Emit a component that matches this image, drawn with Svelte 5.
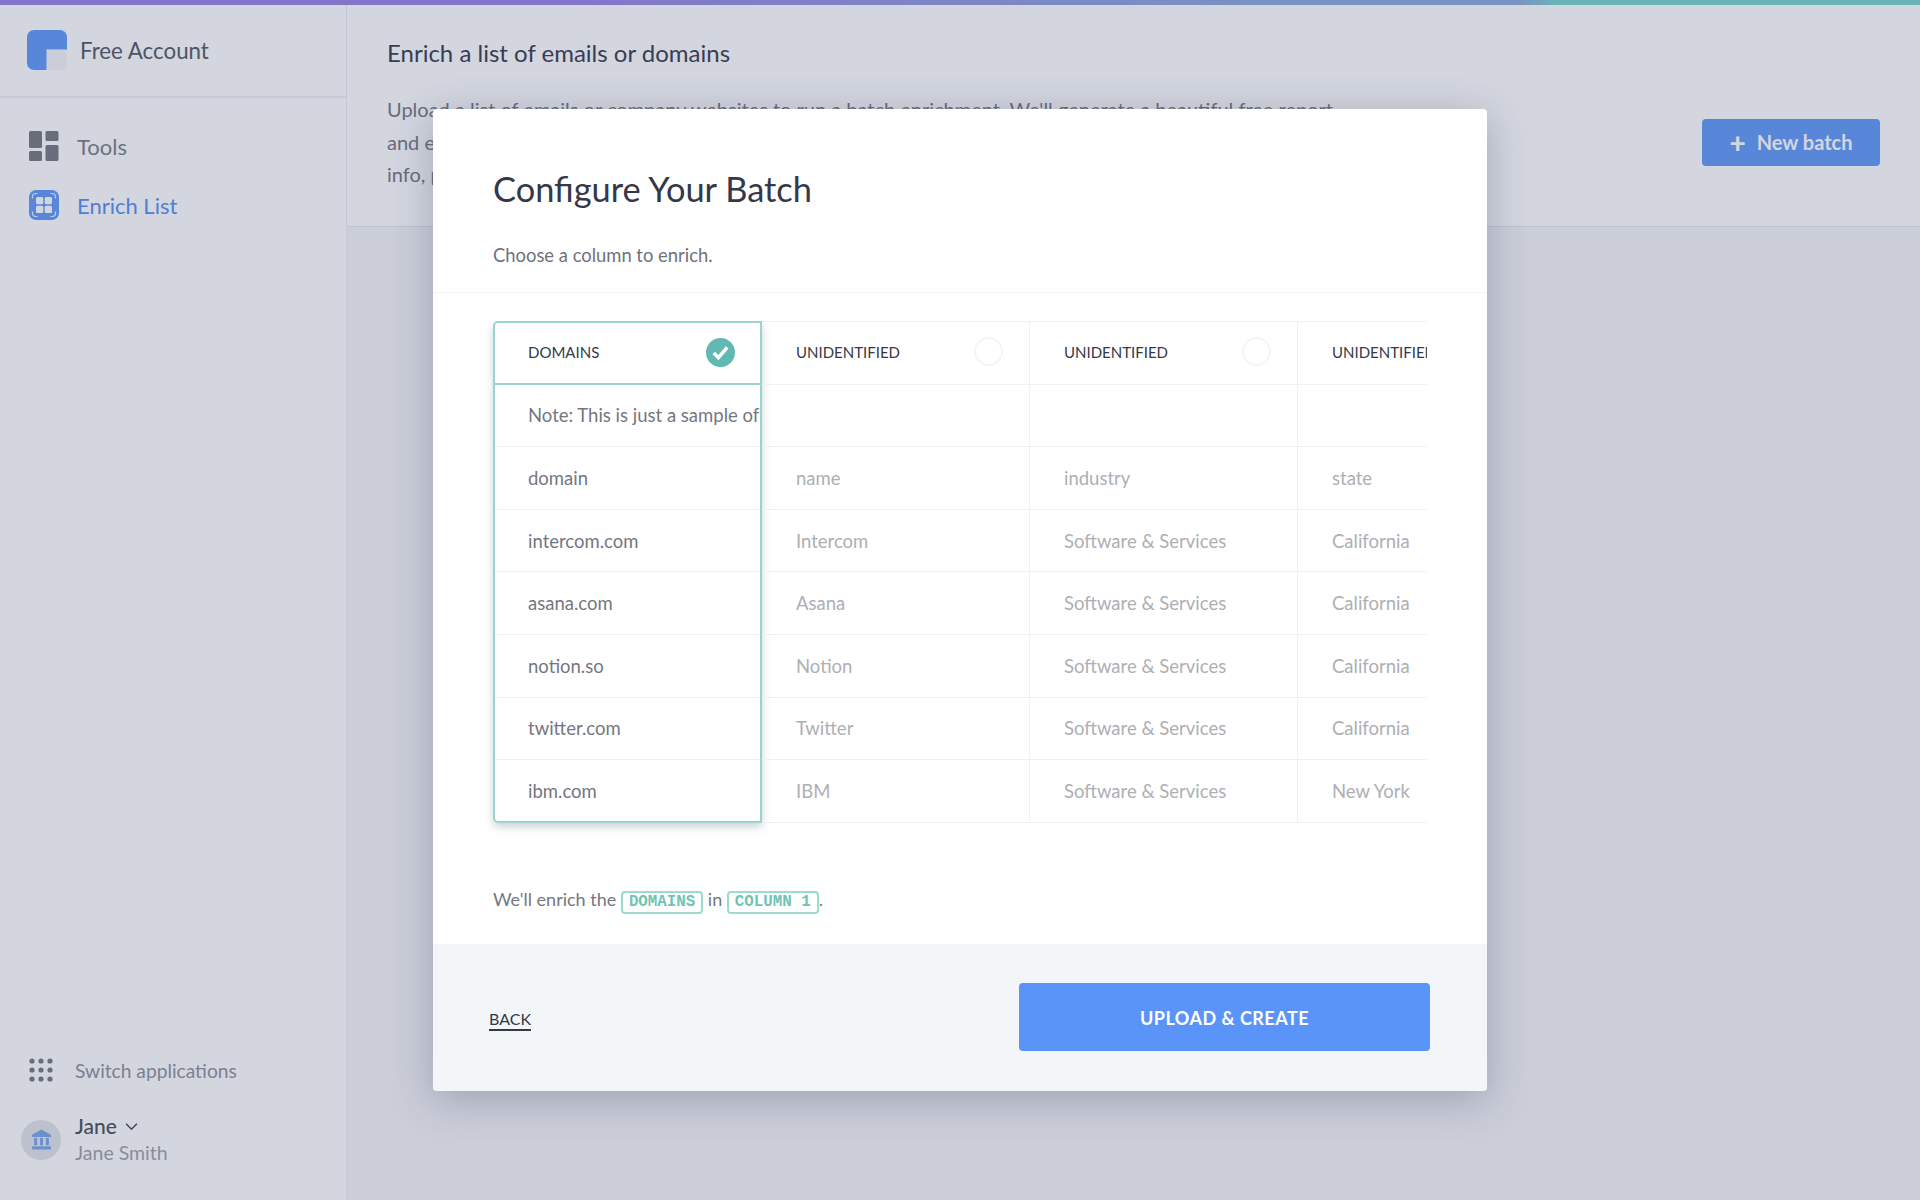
<script>
  const columns = [
    { head: 'DOMAINS', selected: true, cells: ['Note: This is just a sample of', 'domain', 'intercom.com', 'asana.com', 'notion.so', 'twitter.com', 'ibm.com'] },
    { head: 'UNIDENTIFIED', cells: ['', 'name', 'Intercom', 'Asana', 'Notion', 'Twitter', 'IBM'] },
    { head: 'UNIDENTIFIED', cells: ['', 'industry', 'Software & Services', 'Software & Services', 'Software & Services', 'Software & Services', 'Software & Services'] },
    { head: 'UNIDENTIFIED', cells: ['', 'state', 'California', 'California', 'California', 'California', 'New York'] }
  ];
</script>

<div class="page">
  <div class="topbar"></div>
  <div class="shell">
    <aside class="sidebar">
      <div class="brand">
        <svg class="logo" viewBox="0 0 40 40" width="40" height="40">
          <rect x="19.500" y="19.500" width="20.500" height="20.500" rx="4" fill="#f6f6f8" />
          <path d="M7 0H33A7 7 0 0 1 40 7V19.500H19.500V40H7A7 7 0 0 1 0 33V7A7 7 0 0 1 7 0Z" fill="#669df9" />
        </svg>
        <span>Free Account</span>
      </div>
      <nav class="nav">
        <div class="nav-item">
          <svg viewBox="0 0 30 30" width="30" height="30" fill="#7a7c84">
            <rect x="0" y="0" width="13" height="17" rx="1.500" /><rect x="16.500" y="0" width="13" height="10" rx="1.500" />
            <rect x="0" y="20" width="13" height="10" rx="1.500" /><rect x="16.500" y="14" width="13" height="16" rx="1.500" />
          </svg>
          <span>Tools</span>
        </div>
        <div class="nav-item active">
          <svg viewBox="0 0 30 30" width="30" height="30">
            <rect width="30" height="30" rx="7" fill="#669df9" />
            <g fill="#fff"><rect x="7" y="7" width="7.300" height="7.300" rx="1.500" /><rect x="15.700" y="7" width="7.300" height="7.300" rx="1.500" /><rect x="7" y="15.700" width="7.300" height="7.300" rx="1.500" /><rect x="15.700" y="15.700" width="7.300" height="7.300" rx="1.500" /></g>
            <path d="M3.500 8.500V6.500A3 3 0 0 1 6.500 3.500H8.500M21.500 3.500H23.500A3 3 0 0 1 26.500 6.500V8.500M26.500 21.500V23.500A3 3 0 0 1 23.500 26.500H21.500M8.500 26.500H6.500A3 3 0 0 1 3.500 23.500V21.500" fill="none" stroke="#fff" stroke-width="1.200" opacity=".85" />
          </svg>
          <span>Enrich List</span>
        </div>
      </nav>
      <div class="side-bottom">
        <div class="switch">
          <svg viewBox="0 0 24 24" width="24" height="24" fill="#7a7c84">
            {#each [3, 12, 21] as y}{#each [3, 12, 21] as x}<circle cx={x} cy={y} r="2.600" />{/each}{/each}
          </svg>
          <span>Switch applications</span>
        </div>
        <div class="user">
          <div class="avatar">
            <svg viewBox="0 0 20 20" width="21" height="21" fill="#7fa8ea">
              <path d="M10 0.500L19 5.500V7.500H1V5.500Z" /><rect x="3" y="8.500" width="2.800" height="7" /><rect x="8.600" y="8.500" width="2.800" height="7" /><rect x="14.200" y="8.500" width="2.800" height="7" /><rect x="1" y="16.500" width="18" height="3" />
            </svg>
          </div>
          <div class="user-text">
            <div class="user-name">Jane
              <svg viewBox="0 0 12 8" width="13" height="9"><path d="M1 1.500L6 6.500L11 1.500" fill="none" stroke="#50535c" stroke-width="1.500" /></svg>
            </div>
            <div class="user-full">Jane Smith</div>
          </div>
        </div>
      </div>
    </aside>
    <main class="main">
      <header class="main-head">
        <h1>Enrich a list of emails or domains</h1>
        <div class="head-row">
          <p>Upload a list of emails or company websites to run a batch enrichment. We'll generate a beautiful free report<br />and email it to you.<br />info, people and more.</p>
          <button class="new-batch"><span class="plus">+</span>New batch</button>
        </div>
      </header>
    </main>
  </div>
  <div class="overlay"></div>

  <section class="modal">
    <div class="modal-head">
      <h2>Configure Your Batch</h2>
      <p>Choose a column to enrich.</p>
    </div>
    <div class="modal-body">
      <div class="table">
        {#each columns as col}
          <div class="col" class:selected={col.selected}>
            <div class="cell head">
              <span>{col.head}</span>
              <span class="radio">
                {#if col.selected}
                  <svg viewBox="0 0 28 28" width="29" height="29"><circle cx="14" cy="14" r="14" fill="#62b8b3" /><path d="M7.500 14.500L12 19L20.500 9" fill="none" stroke="#fff" stroke-width="3.400" /></svg>
                {/if}
              </span>
            </div>
            {#each col.cells as cell}
              <div class="cell">{cell}</div>
            {/each}
          </div>
        {/each}
      </div>
      <p class="summary">We'll enrich the <code>DOMAINS</code> in <code>COLUMN 1</code>.</p>
    </div>
    <footer class="modal-foot">
      <a class="back" href="#back">BACK</a>
      <button class="upload">UPLOAD &amp; CREATE</button>
    </footer>
  </section>
</div>

<style>
  :global(body) { margin: 0; }
  .page {
    position: relative;
    width: 1920px;
    height: 1200px;
    overflow: hidden;
    display: flex;
    flex-direction: column;
    background: #f5f5f8;
    font-family: Lato, "Open Sans", sans-serif;
    color: #3d4252;
  }
  .topbar {
    height: 5px;
    flex: none;
    background: linear-gradient(90deg, #9b88e2 0%, #9b88e2 30%, #8fa9dc 65%, #8fa9dc 79%, #7ed3ce 81%, #7ed3ce 100%);
  }
  .shell { flex: 1; display: flex; min-height: 0; }
  .sidebar {
    width: 347px;
    flex: none;
    background: #fff;
    border-right: 1px solid #eceef2;
    display: flex;
    flex-direction: column;
    box-sizing: border-box;
  }
  .brand {
    height: 93px;
    flex: none;
    box-sizing: border-box;
    padding: 0 0 1px 27px;
    display: flex;
    align-items: center;
    gap: 13px;
    border-bottom: 2px solid #eef0f4;
    font-size: 22.300px;
    color: #5a5d66;
  }
  .nav { padding-top: 33px; display: flex; flex-direction: column; gap: 29px; }
  .nav-item {
    display: flex;
    align-items: center;
    gap: 18px;
    padding-left: 29px;
    font-size: 22px;
    color: #7f8189;
  }
  .nav-item.active { color: #5a93f2; }
  .side-bottom { margin-top: auto; padding-bottom: 34px; }
  .switch {
    display: flex;
    align-items: center;
    gap: 22px;
    padding-left: 29px;
    font-size: 19.200px;
    color: #92949c;
    margin-bottom: 31px;
  }
  .user { display: flex; align-items: center; gap: 14px; padding-left: 21px; }
  .avatar {
    width: 40px;
    height: 40px;
    border-radius: 50%;
    background: #e4e5e9;
    display: flex;
    align-items: center;
    justify-content: center;
  }
  .user-name { font-size: 21px; font-weight: 500; color: #50535c; display: flex; align-items: center; gap: 8px; line-height: 26px; }
  .user-full { font-size: 19.500px; color: #a2a4ac; line-height: 26px; margin-top: 1px; }
  .main { flex: 1; min-width: 0; }
  .main-head {
    height: 222px;
    box-sizing: border-box;
    background: #fff;
    padding: 34px 40px 0;
    border-bottom: 1px solid #e4e6ec;
  }
  h1 { margin: 0; font-size: 24px; line-height: 28px; font-weight: 400; color: #3d4252; }
  .head-row { display: flex; align-items: center; justify-content: space-between; margin-top: 26px; }
  .head-row p { margin: 0; width: 1000px; font-size: 20px; line-height: 32.500px; color: #787b84; }
  .new-batch {
    width: 178px;
    height: 47px;
    margin-top: 2px;
    border: 0;
    border-radius: 4px;
    background: #669df9;
    color: #fff;
    font: 700 20px Lato, sans-serif;
    display: flex;
    align-items: center;
    justify-content: center;
    gap: 11px;
    padding-bottom: 2px;
  }
  .plus { font-size: 28px; line-height: 1; font-weight: 900; }
  .overlay { position: absolute; inset: 0; background: rgba(35, 50, 95, 0.2); }
  .modal {
    position: absolute;
    left: 433px;
    top: 109px;
    width: 1054px;
    height: 982px;
    background: #fff;
    border-radius: 4px;
    overflow: hidden;
    display: flex;
    flex-direction: column;
    box-shadow: 0 8px 40px rgba(50, 60, 90, 0.3);
  }
  .modal-head {
    height: 184px;
    flex: none;
    box-sizing: border-box;
    padding: 58px 60px 0;
    border-bottom: 1px solid #f3f4f6;
  }
  h2 { margin: 0; font-size: 34.400px; line-height: 44px; font-weight: 400; color: #343848; }
  .modal-head p { margin: 32px 0 0; font-size: 18.400px; line-height: 24px; color: #6f727b; }
  .modal-body { flex: 1; padding: 28px 60px 0; min-height: 0; }
  .table { display: flex; width: 934px; clip-path: inset(0 0 -14px -14px); }
  .col {
    width: 268px;
    flex: none;
    box-sizing: border-box;
    border-right: 1px solid #f0f1f4;
    border-top: 1px solid #f0f1f4;
  }
  .col:last-child { border-right: 0; }
  .col.selected {
    width: 269px;
    border: 2px solid #9bd3ce;
    border-radius: 5px 0 0 5px;
    box-shadow: 0 4px 8px rgba(60, 80, 90, 0.25);
  }
  .cell {
    height: 62.600px;
    box-sizing: border-box;
    padding-left: 34px;
    display: flex;
    align-items: center;
    white-space: nowrap;
    overflow: hidden;
    font-size: 18.500px;
    color: #adafb5;
    border-bottom: 1px solid #eef0f3;
  }
  .selected .cell { padding-left: 33px; color: #74777f; }
  .selected .cell:first-child { height: 61.600px; }
  .selected .cell:last-child { height: 61px; }
  .cell:last-child { border-bottom: 0; }
  .col:not(.selected) .cell:last-child { border-bottom: 1px solid #eef0f3; }
  .cell.head {
    justify-content: space-between;
    padding-right: 26px;
    padding-bottom: 2px;
    font-size: 15px;
    color: #343848;
    border-bottom: 1px solid #f0f1f4;
  }
  .selected .cell.head { border-bottom: 2px solid #9bd3ce; padding-right: 25px; padding-bottom: 1px; }
  .radio {
    width: 29px;
    height: 29px;
    flex: none;
    border-radius: 50%;
    box-sizing: border-box;
    border: 2px solid #f4f5f6;
  }
  .selected .radio { border: 0; }
  .radio svg { display: block; }
  .col:last-child .cell.head span:first-child { flex: none; }
  .summary { margin: 64px 0 0; font-size: 18px; line-height: 24px; color: #74777f; }
  code {
    display: inline-block;
    font: 700 15.800px/19px "Liberation Mono", monospace;
    color: #6fc4b4;
    border: 2px solid #9adccf;
    border-radius: 4px;
    padding: 0 6px;
  }
  .modal-foot {
    height: 147px;
    flex: none;
    box-sizing: border-box;
    background: #f3f6f9;
    padding: 39px 57px 0 56px;
    display: flex;
    justify-content: space-between;
    align-items: flex-start;
  }
  .back {
    margin-top: 26px;
    font-size: 16px;
    line-height: 20px;
    color: #343848;
    text-decoration: none;
    border-bottom: 2px solid #343848;
  }
  .upload {
    width: 411px;
    height: 68px;
    border: 0;
    border-radius: 4px;
    background: #5a94f8;
    color: #fff;
    font: 700 18px Lato, sans-serif;
    letter-spacing: 0.500px;
    padding-top: 2px;
  }
</style>
